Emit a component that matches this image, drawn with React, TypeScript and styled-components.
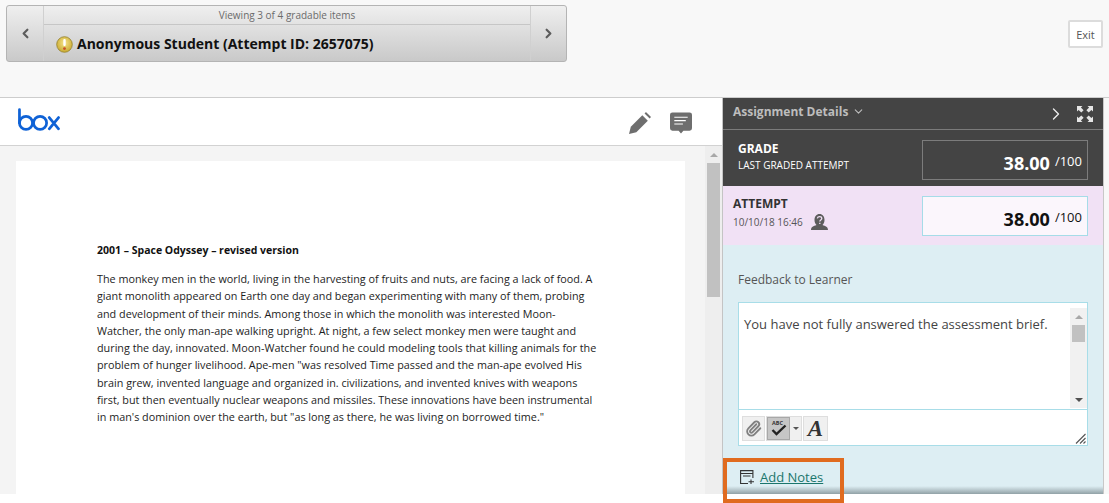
import React from "react";
import styled, { createGlobalStyle } from "styled-components";
import { ChevronDown, ChevronLeft, ChevronRight, Paperclip } from "lucide-react";

const Global = createGlobalStyle`
  html, body { margin: 0; padding: 0; background: #fff; }
  body { font-family: "Open Sans", "Liberation Sans", sans-serif; overflow: hidden; }
  * { box-sizing: border-box; }
`;

const Page = styled.div`
  position: relative;
  width: 1109px;
  height: 503px;
  overflow: hidden;
  background: #fff;
`;

const TopBand = styled.header`
  height: 97px;
  background: #f8f8f8;
  display: flex;
  justify-content: space-between;
  align-items: flex-start;
  padding: 5px 6px 0 6px;
`;

const Navigator = styled.nav`
  width: 561px;
  height: 57px;
  display: flex;
  border: 1px solid #b4b4b4;
  border-radius: 3px;
  background: linear-gradient(#efefef, #c9c9c9);
`;

const NavArrow = styled.button<{ $w: number }>`
  width: ${(p) => p.$w}px;
  flex: none;
  border: 0;
  padding: 0;
  background: transparent;
  display: flex;
  align-items: center;
  justify-content: center;
  color: #5c5c5c;
`;

const NavCenter = styled.div`
  flex: 1;
  border-left: 1px solid #d0d0d0;
  border-right: 1px solid #d0d0d0;
  display: flex;
  flex-direction: column;
`;

const NavCaption = styled.div`
  height: 19px;
  border-bottom: 1px solid #c6c6c6;
  font-size: 10px;
  line-height: 19px;
  text-align: center;
  color: #6b6b6b;
`;

const NavTitle = styled.div`
  display: flex;
  align-items: center;
  gap: 4px;
  padding: 10px 0 0 12px;
  font-size: 14px;
  line-height: 18px;
  font-weight: 700;
  color: #111;
  white-space: nowrap;
`;

const ExitButton = styled.button`
  margin: 15px 0 0;
  width: 35px;
  height: 28px;
  background: #fff;
  border: 2px solid #dcdcdc;
  border-radius: 2px;
  font: 400 11px "Open Sans", sans-serif;
  color: #555;
  padding: 0;
`;

const Workspace = styled.main`
  display: flex;
  height: 397px;
  border-top: 1px solid #cdcdcd;
  background: #f8f8f8;
`;

const Viewer = styled.section`
  width: 722px;
  flex: none;
  display: flex;
  flex-direction: column;
`;

const ViewerBar = styled.div`
  height: 48px;
  flex: none;
  background: #fff;
  border-bottom: 1px solid #d2d2d2;
  display: flex;
  align-items: center;
  justify-content: space-between;
  padding: 0 30px 5px 18px;
`;

const ViewerTools = styled.div`
  display: flex;
  align-items: center;
  gap: 18px;
  margin-top: 7px;
`;

const ViewerBody = styled.div`
  flex: 1;
  display: flex;
  min-height: 0;
`;

const DocArea = styled.div`
  flex: 1;
  background: #f4f4f4;
  padding: 15px 20px 0 16px;
  overflow: hidden;
`;

const DocPage = styled.article`
  height: 400px;
  background: #fff;
  padding: 81px 0 0 81px;
  font-size: 10.8px;
  line-height: 17.25px;
  color: #1d1d1d;
`;

const DocTitle = styled.h1`
  margin: 0 0 11px;
  font-size: 10.5px;
  line-height: 17px;
  font-weight: 700;
  color: #111;
`;

const DocLine = styled.span`
  display: block;
  white-space: nowrap;
`;

const Track = styled.div`
  width: 17px;
  flex: none;
  background: #eeeeee;
  display: flex;
  flex-direction: column;
  align-items: center;
  padding-top: 7px;
`;

const ArrowUp = styled.i`
  width: 0;
  height: 0;
  border-left: 4px solid transparent;
  border-right: 4px solid transparent;
  border-bottom: 4px solid #a8a8a8;
`;

const ArrowDown = styled.i`
  width: 0;
  height: 0;
  border-left: 4px solid transparent;
  border-right: 4px solid transparent;
  border-top: 4px solid #505050;
`;

const CaretGlyph = styled.i`
  width: 0;
  height: 0;
  border-left: 3px solid transparent;
  border-right: 3px solid transparent;
  border-top: 3px solid #555;
`;

const Thumb = styled.div`
  width: 13px;
  height: 134px;
  margin-top: 6px;
  background: #c1c1c1;
`;

const Panel = styled.aside`
  width: 382px;
  flex: none;
  border-left: 1px solid #c4c4c4;
  border-right: 1px solid #c8c8c8;
  display: flex;
  flex-direction: column;
  background: #ddeef3;
  position: relative;
`;

const PanelHeader = styled.div`
  height: 32px;
  flex: none;
  background: #444;
  border-bottom: 1px solid #7b7b7b;
  display: flex;
  align-items: center;
  padding: 0 10px 4px 10px;
  color: #bdbdbd;
  font-size: 12px;
  font-weight: 700;
  gap: 4px;
`;

const PanelHeaderTools = styled.div`
  margin: 4px 0 0 auto;
  display: flex;
  align-items: center;
  gap: 11px;
  color: #eee;
`;

const ScoreRow = styled.div<{ $dark?: boolean }>`
  height: ${(p) => (p.$dark ? 56 : 59)}px;
  flex: none;
  background: ${(p) => (p.$dark ? "#444" : "#f1e1f5")};
  color: ${(p) => (p.$dark ? "#fff" : "#333")};
  display: flex;
  justify-content: space-between;
  align-items: flex-start;
  padding: 10px 15px 0 ${(p) => (p.$dark ? 15 : 10)}px;
`;

const ScoreLabel = styled.div<{ $top: number }>`
  padding-top: ${(p) => p.$top}px;
`;

const ScoreTitle = styled.div`
  font-size: 12px;
  line-height: 15px;
  font-weight: 700;
`;

const ScoreSub = styled.div`
  font-size: 10px;
  line-height: 14px;
  display: flex;
  align-items: center;
  gap: 8px;
  margin-top: 2px;
`;

const AttemptDate = styled(ScoreSub)`
  color: #555;
  margin-top: 3px;
`;

const ScoreBox = styled.div<{ $dark?: boolean }>`
  width: 166px;
  height: 40px;
  border: 1px solid ${(p) => (p.$dark ? "#7c7c7c" : "#a5dce8")};
  background: ${(p) => (p.$dark ? "transparent" : "#fbf6fc")};
  color: ${(p) => (p.$dark ? "#fff" : "#111")};
  display: flex;
  justify-content: flex-end;
  align-items: baseline;
  padding: 10px 5px 0 0;
  gap: 5px;
`;

const ScoreValue = styled.span`
  font-size: 18px;
  line-height: 24px;
  font-weight: 700;
`;

const ScoreMax = styled.span`
  font-size: 13px;
  position: relative;
  top: -4px;
`;

const Feedback = styled.div`
  flex: 1;
  padding: 26px 15px 0 15px;
`;

const FeedbackLabel = styled.div`
  font-size: 12px;
  line-height: 18px;
  color: #555;
  margin-bottom: 13px;
`;

const Editor = styled.div`
  height: 144px;
  background: #fff;
  border: 1px solid #a8dde8;
  display: flex;
  flex-direction: column;
`;

const EditorBody = styled.div`
  height: 107px;
  flex: none;
  display: flex;
  border-bottom: 1px solid #a8dde8;
  padding: 5px 0 1px 0;
`;

const EditorText = styled.div`
  flex: 1;
  padding: 7px 0 0 5px;
  font-size: 13px;
  line-height: 18px;
  color: #444;
  white-space: nowrap;
`;

const EditorScroll = styled.div`
  width: 17px;
  flex: none;
  background: #f1f1f1;
  display: flex;
  flex-direction: column;
  align-items: center;
  padding: 7px 0 6px;
`;

const EditorThumb = styled.div`
  width: 13px;
  height: 17px;
  margin-top: 6px;
  margin-bottom: auto;
  background: #c1c1c1;
`;

const Toolbar = styled.div`
  flex: 1;
  position: relative;
  display: flex;
  align-items: flex-start;
  gap: 1px;
  padding: 6px 0 0 3px;
`;

const ToolGroup = styled.div`
  height: 25px;
  display: flex;
  align-items: center;
  background: #f0f0f0;
  border: 1px solid #dedede;
`;

const ToolButton = styled.div<{ $active?: boolean; $w: number }>`
  width: ${(p) => p.$w}px;
  height: 23px;
  display: flex;
  align-items: center;
  justify-content: center;
  background: ${(p) => (p.$active ? "#c6c6c6" : "transparent")};
  border: ${(p) => (p.$active ? "1px solid #a8a8a8" : "0")};
  color: #808080;
`;

const Caret = styled.div`
  width: 11px;
  display: flex;
  justify-content: center;
`;

const FontGlyph = styled.span`
  font: italic 700 23px/23px "Liberation Serif", serif;
  color: #333;
`;

const Grip = styled.svg`
  position: absolute;
  right: 1px;
  bottom: 1px;
`;

const NotesRow = styled.div`
  display: flex;
  align-items: center;
  gap: 6px;
  padding: 22px 0 0 2px;
`;

const NotesLink = styled.a`
  font-size: 13px;
  line-height: 18px;
  color: #1a766c;
  text-decoration: underline;
`;

const PanelShade = styled.div`
  position: absolute;
  left: 0;
  right: 0;
  bottom: 0;
  height: 8px;
  background: linear-gradient(rgba(120, 135, 140, 0), rgba(120, 135, 140, 0.75));
`;

const Callout = styled.div`
  position: absolute;
  left: 723px;
  top: 458px;
  width: 121px;
  height: 45px;
  border: 4px solid #e06b1f;
`;

const lines = [
  "The monkey men in the world, living in the harvesting of fruits and nuts, are facing a lack of food. A",
  "giant monolith appeared on Earth one day and began experimenting with many of them, probing",
  "and development of their minds. Among those in which the monolith was interested Moon-",
  "Watcher, the only man-ape walking upright. At night, a few select monkey men were taught and",
  "during the day, innovated. Moon-Watcher found he could modeling tools that killing animals for the",
  "problem of hunger livelihood. Ape-men \"was resolved Time passed and the man-ape evolved His",
  "brain grew, invented language and organized in. civilizations, and invented knives with weapons",
  "first, but then eventually nuclear weapons and missiles. These innovations have been instrumental",
  "in man's dominion over the earth, but \"as long as there, he was living on borrowed time.\"",
];

const WarningIcon = () => (
  <svg width="17" height="17" viewBox="0 0 17 17">
    <defs>
      <radialGradient id="warn" cx="50%" cy="40%" r="60%">
        <stop offset="0%" stopColor="#f6e58c" />
        <stop offset="100%" stopColor="#c9a92f" />
      </radialGradient>
    </defs>
    <circle cx="8.5" cy="8.5" r="7.8" fill="url(#warn)" stroke="#94812f" strokeWidth="0.8" />
    <rect x="7.3" y="3" width="2.4" height="7" rx="1" fill="#fff" />
    <circle cx="8.5" cy="12.6" r="1.4" fill="#c8502a" />
  </svg>
);

const BoxLogo = () => (
  <svg width="42" height="23" viewBox="0 0 43 23" fill="none" stroke="#0f62d6" strokeWidth="2.8" strokeLinecap="round">
    <path d="M1.5 1.5V15" />
    <circle cx="8.2" cy="15" r="6.7" />
    <circle cx="22.6" cy="15" r="6.7" />
    <path d="M32 9.5L41.5 21M41.5 9.5L32 21" />
  </svg>
);

const PencilIcon = () => (
  <svg width="24" height="22" viewBox="0 0 24 24" fill="#6e6e6e">
    <path d="M0 24l2-8L14.500 3.500l6 6L8 22z" />
    <path d="M17 1.500L18.500 0l5.500 5.500-1.500 1.500z" />
  </svg>
);

const CommentIcon = () => (
  <svg width="22" height="22" viewBox="0 0 23 22">
    <path d="M2.5 0h18A2.5 2.5 0 0 1 23 2.5v14a2.5 2.5 0 0 1-2.5 2.5H14l-2.5 3L9 19H2.5A2.5 2.5 0 0 1 0 16.500v-14A2.500 2.500 0 0 1 2.500 0z" fill="#6e6e6e" />
    <path d="M4.500 5h14M4.500 8.500h12M4.500 12h9" stroke="#fff" strokeWidth="1.100" />
  </svg>
);

const ExpandIcon = () => (
  <svg width="16" height="16" viewBox="0 0 16 16" fill="#e6e6e6">
    <path d="M0 0h5.500L3.900 1.600 6.600 4.300 4.300 6.600 1.600 3.900 0 5.500z" />
    <path d="M16 0h-5.500l1.600 1.600-2.700 2.700 2.300 2.300 2.700-2.700L16 5.500z" />
    <path d="M0 16h5.500l-1.600-1.600 2.700-2.700-2.300-2.300-2.700 2.700L0 10.500z" />
    <path d="M16 16h-5.500l1.600-1.600-2.700-2.700 2.300-2.300 2.700 2.700 1.600-1.600z" />
  </svg>
);

const AnonymousIcon = () => (
  <svg width="17" height="16" viewBox="0 0 17 16">
    <path d="M0 16c0-3 2.500-4 5.500-5C4.200 9.700 3.500 8 3.500 6c0-3.500 2-6 5-6s5 2.500 5 6c0 2-.7 3.700-2 5 3 1 5.500 2 5.500 5z" fill="#5c5c5c" />
    <path d="M6.300 4.300c.3-1.100 1.200-1.600 2.300-1.600 1.300 0 2.200.7 2.200 1.800 0 1.500-2 1.500-2 3M8.800 8.700v1.200" stroke="#f1e1f5" strokeWidth="1.300" fill="none" />
  </svg>
);

const SpellIcon = () => (
  <svg width="20" height="19" viewBox="0 0 20 19">
    <text x="3" y="6" fontFamily="Open Sans, sans-serif" fontSize="5.500" fontWeight="700" fill="#333">ABC</text>
    <path d="M3.500 11l4 4 9-8.500" stroke="#222" strokeWidth="2.400" fill="none" />
  </svg>
);

const NotesIcon = () => (
  <svg width="14" height="14" viewBox="0 0 14 14" fill="none" stroke="#333" strokeWidth="1.100">
    <path d="M8 13.500H.6V.6h12.300V8" />
    <path d="M.6 3.500h12.300M3 6h7.500" />
    <path d="M11 9.500v4.500M8.500 11.700H14" />
  </svg>
);

const GripIcon = () => (
  <Grip width="11" height="11" viewBox="0 0 11 11" stroke="#555" strokeWidth="1.100">
    <path d="M1 10.500L10.500 1M5 10.500L10.500 5M8.500 10.500L10.500 8.500" />
  </Grip>
);

export default function App() {
  return (
    <Page>
      <Global />
      <TopBand>
        <Navigator>
          <NavArrow $w={36} aria-label="Previous">
            <ChevronLeft size={15} strokeWidth={3.5} />
          </NavArrow>
          <NavCenter>
            <NavCaption>Viewing 3 of 4 gradable items</NavCaption>
            <NavTitle>
              <WarningIcon />
              Anonymous Student (Attempt ID: 2657075)
            </NavTitle>
          </NavCenter>
          <NavArrow $w={35} aria-label="Next">
            <ChevronRight size={15} strokeWidth={3.5} />
          </NavArrow>
        </Navigator>
        <ExitButton>Exit</ExitButton>
      </TopBand>
      <Workspace>
        <Viewer>
          <ViewerBar>
            <BoxLogo />
            <ViewerTools>
              <PencilIcon />
              <CommentIcon />
            </ViewerTools>
          </ViewerBar>
          <ViewerBody>
            <DocArea>
              <DocPage>
                <DocTitle>2001 – Space Odyssey – revised version</DocTitle>
                {lines.map((l) => (
                  <DocLine key={l}>{l}</DocLine>
                ))}
              </DocPage>
            </DocArea>
            <Track>
              <ArrowUp />
              <Thumb />
            </Track>
          </ViewerBody>
        </Viewer>
        <Panel>
          <PanelHeader>
            Assignment Details
            <ChevronDown size={13} strokeWidth={2} />
            <PanelHeaderTools>
              <ChevronRight size={20} strokeWidth={1.6} />
              <ExpandIcon />
            </PanelHeaderTools>
          </PanelHeader>
          <ScoreRow $dark>
            <ScoreLabel $top={1}>
              <ScoreTitle>GRADE</ScoreTitle>
              <ScoreSub>LAST GRADED ATTEMPT</ScoreSub>
            </ScoreLabel>
            <ScoreBox $dark>
              <ScoreValue>38.00</ScoreValue>
              <ScoreMax>/100</ScoreMax>
            </ScoreBox>
          </ScoreRow>
          <ScoreRow>
            <ScoreLabel $top={0}>
              <ScoreTitle>ATTEMPT</ScoreTitle>
              <AttemptDate>
                10/10/18 16:46
                <AnonymousIcon />
              </AttemptDate>
            </ScoreLabel>
            <ScoreBox>
              <ScoreValue>38.00</ScoreValue>
              <ScoreMax>/100</ScoreMax>
            </ScoreBox>
          </ScoreRow>
          <Feedback>
            <FeedbackLabel>Feedback to Learner</FeedbackLabel>
            <Editor>
              <EditorBody>
                <EditorText>You have not fully answered the assessment brief.</EditorText>
                <EditorScroll>
                  <ArrowUp />
                  <EditorThumb />
                  <ArrowDown />
                </EditorScroll>
              </EditorBody>
              <Toolbar>
                <ToolGroup>
                  <ToolButton $w={21}>
                    <Paperclip size={17} strokeWidth={2.6} />
                  </ToolButton>
                </ToolGroup>
                <ToolGroup>
                  <ToolButton $w={23} $active>
                    <SpellIcon />
                  </ToolButton>
                  <Caret>
                    <CaretGlyph />
                  </Caret>
                </ToolGroup>
                <ToolGroup>
                  <ToolButton $w={23}>
                    <FontGlyph>A</FontGlyph>
                  </ToolButton>
                </ToolGroup>
                <GripIcon />
              </Toolbar>
            </Editor>
            <NotesRow>
              <NotesIcon />
              <NotesLink href="#">Add Notes</NotesLink>
            </NotesRow>
          </Feedback>
          <PanelShade />
        </Panel>
      </Workspace>
      <Callout />
    </Page>
  );
}
